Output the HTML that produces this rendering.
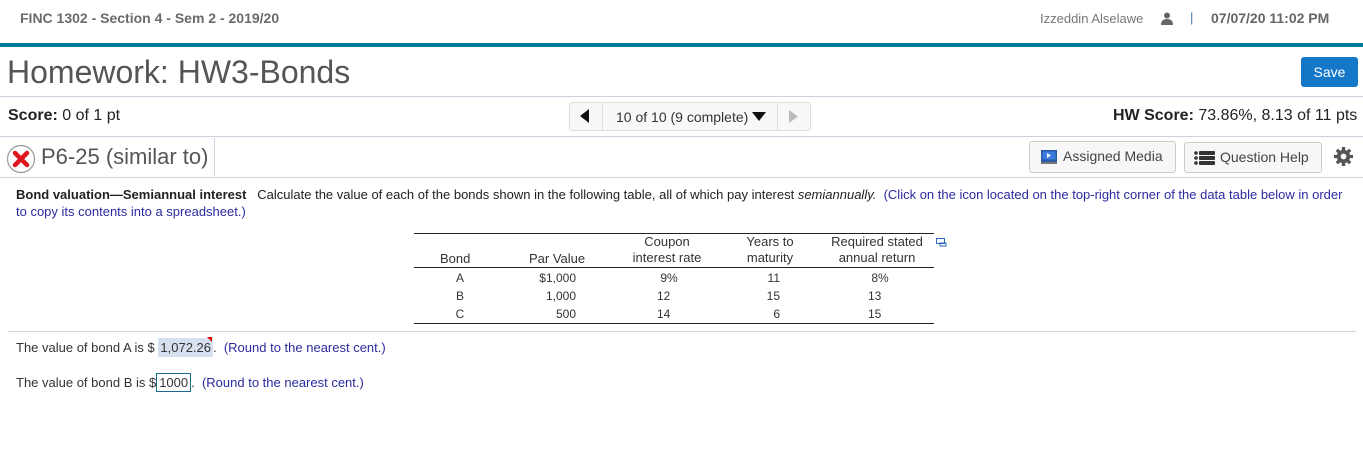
<!DOCTYPE html>
<html><head><style>
*{margin:0;padding:0;box-sizing:border-box}
body{width:1363px;height:456px;background:#fff;font-family:"Liberation Sans",Arial,sans-serif;position:relative;overflow:hidden;color:#222}
.a{position:absolute;white-space:nowrap}
.hl{position:absolute;height:1px;background:#ccd3de}
.btn{position:absolute;border:1px solid #ccc;border-radius:3px;background:#f7f7f7;font-size:14px;color:#444}
</style></head><body>
<div class="a" style="left:20px;top:10px;font-size:14px;font-weight:bold;color:#6a6a6a">FINC 1302 - Section 4 - Sem 2 - 2019/20</div>
<div class="a" style="left:1040px;top:11px;font-size:13px;color:#777">Izzeddin Alselawe</div>
<svg class="a" style="left:1161px;top:12px" width="12" height="13" viewBox="0 0 12 13"><circle cx="6" cy="3.5" r="3" fill="#666"/><path d="M0 13 Q0 7 6 7 Q12 7 12 13Z" fill="#666"/></svg>
<div class="a" style="left:1190px;top:10px;font-size:13px;color:#4a7aa8">|</div>
<div class="a" style="left:1211px;top:10px;font-size:14px;font-weight:bold;color:#666">07/07/20 11:02 PM</div>
<div class="a" style="left:0;top:43px;width:1363px;height:4px;background:#00799a"></div>
<div class="a" style="left:7px;top:54px;font-size:32px;color:#555">Homework: HW3-Bonds</div>
<div class="a" style="left:1301px;top:57px;width:57px;height:30px;background:#1477c8;border-radius:3px;color:#fff;font-size:14px;text-align:center;line-height:30px">Save</div>
<div class="hl" style="left:0;top:96px;width:1363px"></div>
<div class="a" style="left:8px;top:107px;font-size:16px;color:#222"><b>Score:</b> 0 of 1 pt</div>
<div class="a" style="left:569px;top:102px;width:242px;height:29px;border:1px solid #ddd;border-radius:3px;background:#f8f8f8"></div>
<div class="a" style="left:602px;top:103px;width:1px;height:27px;background:#ddd"></div>
<div class="a" style="left:777px;top:103px;width:1px;height:27px;background:#ddd"></div>
<svg class="a" style="left:580px;top:109px" width="10" height="14"><path d="M9 0 L0 7 L9 14Z" fill="#111"/></svg>
<div class="a" style="left:616px;top:109px;font-size:14px;color:#333">10 of 10 (9 complete)</div>
<svg class="a" style="left:752px;top:112px" width="14" height="10"><path d="M0 0 L14 0 L7 9Z" fill="#111"/></svg>
<svg class="a" style="left:789px;top:110px" width="9" height="13"><path d="M0 0 L9 6.5 L0 13Z" fill="#bbb"/></svg>
<div class="a" style="left:1113px;top:107px;font-size:16px;color:#222"><b>HW Score:</b> 73.86%, 8.13 of 11 pts</div>
<div class="hl" style="left:0;top:136px;width:1363px"></div>
<svg class="a" style="left:6px;top:144px" width="30" height="30" viewBox="0 0 30 30"><circle cx="15" cy="15" r="13.5" fill="#fff" stroke="#999" stroke-width="1.2"/><path d="M9 9 L21 21 M21 9 L9 21" stroke="#e0161e" stroke-width="4.5" stroke-linecap="round"/></svg>
<div class="a" style="left:41px;top:144px;font-size:22px;color:#555">P6-25 (similar to)</div>
<div class="a" style="left:214px;top:138px;width:1px;height:38px;background:#ccd3de"></div>
<div class="btn" style="left:1029px;top:141px;width:147px;height:32px"></div>
<svg class="a" style="left:1041px;top:150px" width="16" height="14"><rect x="0" y="0" width="16" height="12" fill="#2a5aa8"/><rect x="1.5" y="1.5" width="13" height="8" fill="#3a7ad8"/><path d="M6 3 L10 5.5 L6 8Z" fill="#fff"/><rect x="0" y="12" width="16" height="2" fill="#777"/></svg>
<div class="a" style="left:1063px;top:148px;font-size:14px;color:#444">Assigned Media</div>
<div class="btn" style="left:1184px;top:142px;width:138px;height:31px"></div>
<svg class="a" style="left:1194px;top:151px" width="22" height="14"><g fill="#333"><circle cx="2" cy="2" r="1.8"/><circle cx="2" cy="7" r="1.8"/><circle cx="2" cy="12" r="1.8"/><rect x="5" y="0" width="16" height="4" rx="1"/><rect x="5" y="5" width="16" height="4" rx="1"/><rect x="5" y="10" width="16" height="4" rx="1"/></g></svg>
<div class="a" style="left:1220px;top:149px;font-size:14px;color:#444">Question Help</div>
<svg class="a" style="left:1334px;top:147px" width="19" height="19" viewBox="0 0 20 20"><g fill="#555"><circle cx="10" cy="10" r="7"/><g stroke="#555" stroke-width="3.5"><path d="M10 0V20M0 10H20M3 3L17 17M17 3L3 17"/></g></g><circle cx="10" cy="10" r="3" fill="#fff"/></svg>
<div class="hl" style="left:0;top:177px;width:1363px"></div>
<div class="a" style="left:16px;top:187px;font-size:13px;color:#222"><b>Bond valuation—Semiannual interest</b>&nbsp;&nbsp; Calculate the value of each of the bonds shown in the following table, all of which pay interest <i>semiannually.</i>&nbsp; <span style="color:#2b2ba0">(Click on the icon located on the top-right corner of the data table below in order</span></div>
<div class="a" style="left:16px;top:204px;font-size:13px;color:#2b2ba0">to copy its contents into a spreadsheet.)</div>
<div class="a" style="left:414px;top:233px;width:520px;height:1px;background:#222"></div>
<div class="a" style="left:414px;top:267px;width:520px;height:1px;background:#222"></div>
<div class="a" style="left:414px;top:323px;width:520px;height:1px;background:#222"></div>
<div class="a" style="left:440px;top:251px;font-size:13px;color:#333">Bond</div>
<div class="a" style="left:529px;top:251px;font-size:13px;color:#333">Par Value</div>
<div class="a" style="left:600px;top:234px;width:134px;text-align:center;font-size:13px;color:#333;line-height:16px">Coupon<br>interest rate</div>
<div class="a" style="left:720px;top:234px;width:100px;text-align:center;font-size:13px;color:#333;line-height:16px">Years to<br>maturity</div>
<div class="a" style="left:815px;top:234px;width:124px;text-align:center;font-size:13px;color:#333;line-height:16px">Required stated<br>annual return</div>
<svg class="a" style="left:936px;top:238px" width="11" height="9"><rect x="0.5" y="0.5" width="8" height="5" fill="none" stroke="#2a6ab8"/><rect x="4" y="5" width="6" height="3" fill="none" stroke="#2a6ab8"/></svg>
<div class="a" style="left:440px;top:269px;width:40px;text-align:center;font-size:12px;color:#333;line-height:18px">A<br>B<br>C</div>
<div class="a" style="left:520px;top:269px;width:56px;text-align:right;font-size:12px;color:#333;line-height:18px">$1,000<br>1,000<br>500</div>
<div class="a" style="left:657px;top:269px;font-size:12px;color:#333;line-height:18px">&nbsp;9%<br>12<br>14</div>
<div class="a" style="left:740px;top:269px;width:40px;text-align:right;font-size:12px;color:#333;line-height:18px">11<br>15<br>6</div>
<div class="a" style="left:868px;top:269px;font-size:12px;color:#333;line-height:18px">&nbsp;8%<br>13<br>15</div>
<div class="hl" style="left:8px;top:331px;width:1348px"></div>
<div class="a" style="left:16px;top:340px;font-size:13px;color:#333">The value of bond A is $ <span style="background:#d6e0ee;padding:2px 2px">1,072.26</span>.&nbsp; <span style="color:#2b2ba0">(Round to the nearest cent.)</span></div>
<svg class="a" style="left:207px;top:337px" width="5" height="5"><path d="M0 0H5V5Z" fill="#d00"/></svg>
<div class="a" style="left:16px;top:375px;font-size:13px;color:#333">The value of bond B is $<span style="border:1px solid #1a6a8a;padding:1px 2px">1000</span>.&nbsp; <span style="color:#2b2ba0">(Round to the nearest cent.)</span></div>
</body></html>
